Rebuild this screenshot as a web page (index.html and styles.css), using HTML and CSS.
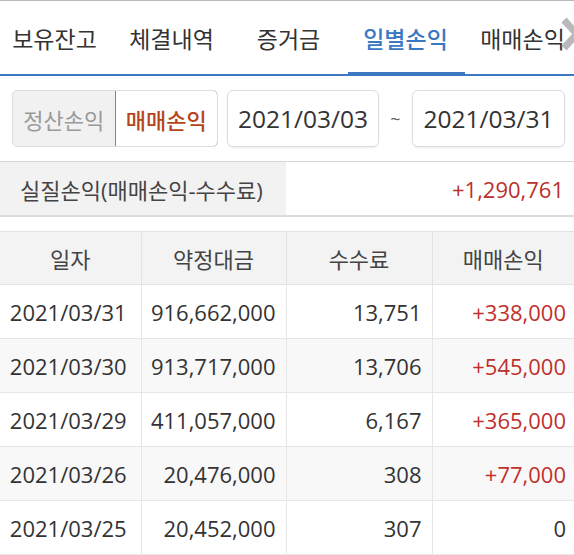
FILE: index.html
```html
<!DOCTYPE html>
<html lang="ko">
<head>
<meta charset="utf-8">
<link rel="stylesheet" href="styles.css">
</head>
<body>
<div class="page">
  <nav class="tabs">
    <div class="tab">보유잔고</div>
    <div class="tab">체결내역</div>
    <div class="tab">증거금</div>
    <div class="tab active">일별손익</div>
    <div class="tab">매매손익</div>
    <svg class="chev" width="22" height="36" viewBox="0 0 22 36"><path d="M4 4 L17 18 L4 32" fill="none" stroke="#b9b9b9" stroke-width="7" stroke-linejoin="miter"/></svg>
  </nav>
  <div class="controls">
    <div class="seg">
      <div class="seg-btn">정산손익</div>
      <div class="seg-btn on">매매손익</div>
    </div>
    <div class="date first">2021/03/03</div>
    <div class="tilde">~</div>
    <div class="date">2021/03/31</div>
  </div>
  <div class="summary">
    <div class="sum-label">실질손익(매매손익-수수료)</div>
    <div class="sum-value">+1,290,761</div>
  </div>
  <table class="grid">
    <colgroup><col class="c1"><col class="c2"><col class="c3"><col class="c4"></colgroup>
    <thead>
      <tr><th>일자</th><th>약정대금</th><th>수수료</th><th>매매손익</th></tr>
    </thead>
    <tbody>
      <tr><td class="d">2021/03/31</td><td>916,662,000</td><td>13,751</td><td class="up">+338,000</td></tr>
      <tr class="alt"><td class="d">2021/03/30</td><td>913,717,000</td><td>13,706</td><td class="up">+545,000</td></tr>
      <tr><td class="d">2021/03/29</td><td>411,057,000</td><td>6,167</td><td class="up">+365,000</td></tr>
      <tr class="alt"><td class="d">2021/03/26</td><td>20,476,000</td><td>308</td><td class="up">+77,000</td></tr>
      <tr><td class="d">2021/03/25</td><td>20,452,000</td><td>307</td><td>0</td></tr>
    </tbody>
  </table>
</div>
</body>
</html>
```
FILE: styles.css
```css
* { box-sizing: border-box; }
html, body { margin: 0; padding: 0; background: #fff; }
body {
  font-family: "Open Sans", "Noto Sans CJK KR", sans-serif;
  color: #333;
  width: 574px;
  height: 555px;
  overflow: hidden;
}
.page { width: 574px; }

.tabs {
  position: relative;
  display: flex;
  height: 76px;
  border-top: 1px solid #b8b8b8;
  border-bottom: 2px solid #3a78c4;
  margin-left: -4px;
  width: 578px;
}
.tab {
  flex: 0 0 117px;
  display: flex;
  align-items: center;
  justify-content: center;
  font-size: 23px;
  color: #333;
  padding-top: 1px;
  white-space: nowrap;
}
.tab.active {
  color: #3a78c4;
  font-weight: 500;
  position: relative;
}
.tab.active::after {
  content: "";
  position: absolute;
  left: 1px;
  right: -1px;
  bottom: -2px;
  height: 4px;
  background: #3a78c4;
}
.chev {
  position: absolute;
  right: -8px;
  top: 15px;
}

.controls {
  display: flex;
  align-items: center;
  padding: 14px 0 0 12px;
  height: 71px;
}
.seg {
  display: flex;
  width: 206px;
  height: 57px;
  border: 1px solid #dcdcdc;
  border-radius: 5px;
  overflow: hidden;
  background: #f1f1f1;
}
.seg-btn {
  flex: 1;
  display: flex;
  align-items: center;
  justify-content: center;
  font-size: 22px;
  color: #9a9a9a;
}
.seg-btn.on {
  background: #fff;
  color: #b5461b;
  font-weight: 500;
  border: 1px solid #c0704c;
  border-radius: 0 5px 5px 0;
  margin: -1px -1px -1px 0;
}
.date {
  width: 153px;
  height: 57px;
  border: 1px solid #dcdcdc;
  border-radius: 6px;
  box-shadow: 0 1px 2px rgba(0,0,0,0.08);
  display: flex;
  align-items: center;
  justify-content: center;
  font-size: 24.5px;
  color: #333;
}
.date.first { margin-left: 9px; width: 152px; }
.tilde {
  width: 33px;
  text-align: center;
  font-size: 18px;
  color: #666;
}

.summary {
  display: flex;
  height: 56px;
  margin-top: 14px;
  border-top: 1px solid #d6d6d6;
  border-bottom: 2px solid #dcdcdc;
}
.sum-label {
  width: 286px;
  background: #f2f2f2;
  display: flex;
  align-items: center;
  padding-left: 20px;
  font-size: 22px;
  color: #444;
}
.sum-value {
  flex: 1;
  display: flex;
  align-items: center;
  justify-content: flex-end;
  padding-right: 10px;
  font-size: 22px;
  color: #b9302c;
}

.grid {
  margin-top: 14px;
  width: 574px;
  border-collapse: collapse;
  table-layout: fixed;
}
.c1 { width: 141px; }
.c2 { width: 145px; }
.c3 { width: 146px; }
.c4 { width: 142px; }
.grid th {
  height: 53px;
  background: #f3f3f3;
  font-weight: 400;
  font-size: 22px;
  color: #444;
  border-top: 1px solid #e2e2e2;
  border-bottom: 1px solid #e2e2e2;
  border-left: 1px solid #e2e2e2;
  padding: 0;
}
.grid th:first-child, .grid td:first-child { border-left: none; }
.grid td {
  height: 54px;
  font-size: 22px;
  color: #333;
  text-align: right;
  padding: 0 10px 0 0;
  border-bottom: 1px solid #e6e6e6;
  border-left: 1px solid #e6e6e6;
  white-space: nowrap;
}
.grid td.d { text-align: center; padding: 0 4px 0 0; }
.grid td:last-child { padding-right: 8px; }
.grid tr.alt td { background: #f8f8f8; }
.grid td.up { color: #c0302c; }
```
